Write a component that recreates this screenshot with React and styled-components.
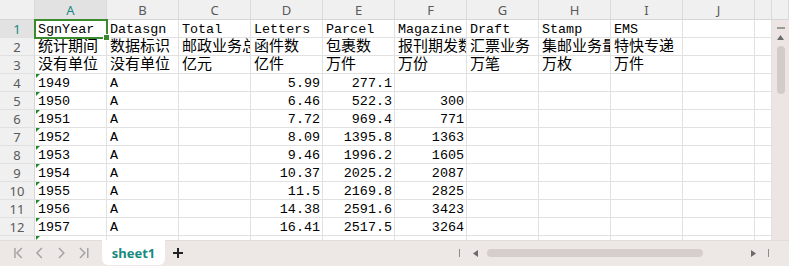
import React from 'react';
import styled, { createGlobalStyle } from 'styled-components';

const cellFont = '"Liberation Mono", "Noto Sans CJK SC", monospace';
const uiFont = '"Noto Sans", "Open Sans", "Noto Sans CJK SC", sans-serif';

const GlobalStyle = createGlobalStyle`
  html, body { margin: 0; padding: 0; background: #fff; }
  body { width: 789px; height: 266px; overflow: hidden; }
`;

const Page = styled.div`
  width: 789px;
  height: 266px;
  display: flex;
  flex-direction: column;
  overflow: hidden;
`;

const Sheet = styled.div`
  height: 240px;
  display: grid;
  grid-template-columns: 35px repeat(10, 72px) 17px 17px;
  grid-auto-rows: 18px;
  grid-template-rows: 20px;
  overflow: hidden;
  position: relative;
`;

const ColHead = styled.div`
  box-sizing: border-box;
  background: ${p => (p.active ? '#e2e2e2' : '#f0f0f0')};
  border-right: 1px solid #dadada;
  border-bottom: 1px solid #d6d6d6;
  color: ${p => (p.active ? '#178a80' : '#5a5a5a')};
  font-family: ${uiFont};
  font-size: 13px;
  display: flex;
  align-items: center;
  justify-content: center;
  padding-top: 1px;
`;

const RowHead = styled.div`
  box-sizing: border-box;
  background: ${p => (p.active ? '#e2e2e2' : '#f0f0f0')};
  border-right: 1px solid #d6d6d6;
  border-bottom: 1px solid #e0e0e0;
  color: ${p => (p.active ? '#178a80' : '#5a5a5a')};
  font-family: ${uiFont};
  font-size: 13px;
  display: flex;
  align-items: center;
  justify-content: center;
`;

const Cell = styled.div`
  box-sizing: border-box;
  position: relative;
  border-right: 1px solid #e1e1e1;
  border-bottom: 1px solid #e1e1e1;
  font-family: ${cellFont};
  font-size: ${p => (p.cjk ? '15px' : '13.4px')};
  line-height: 17px;
  color: #000;
  white-space: nowrap;
  padding: 1px 2px 0 3px;
  text-align: ${p => (p.num ? 'right' : 'left')};
  outline: ${p => (p.selected ? '2px solid #3c8a2e' : 'none')};
  outline-offset: -1px;
  z-index: ${p => (p.selected ? 2 : 0)};
  overflow: ${p => (p.selected ? 'visible' : 'hidden')};
`;

const TextMark = styled.span`
  position: absolute;
  left: 1px;
  top: 0;
  width: 0;
  height: 0;
  border-top: 4px solid #1f8a2a;
  border-right: 4px solid transparent;
`;

const Handle = styled.span`
  position: absolute;
  right: -4px;
  bottom: -4px;
  width: 5px;
  height: 5px;
  background: #3c8a2e;
  border: 1px solid #fff;
`;

const VScroll = styled.div`
  grid-column: 13;
  grid-row: 2 / span 13;
  background: #ede5e3;
  display: flex;
  flex-direction: column;
  align-items: center;
  padding-top: 7px;
  gap: 6px;
`;

const Dash = styled.div`
  width: 8px;
  height: 2px;
  background: #9a9a9a;
`;

const Thumb = styled.div`
  width: 8px;
  height: 48px;
  border-radius: 4px;
  background: #d3cbc9;
`;

const Spacer = styled.div`
  flex: 1;
`;

const DownSlot = styled.div`
  height: 10px;
`;

const Bottom = styled.div`
  height: 26px;
  background: #ede7e5;
  display: flex;
  align-items: flex-start;
  border-top: 1px solid #e2dcda;
  box-sizing: border-box;
`;

const NavGroup = styled.div`
  box-sizing: border-box;
  display: flex;
  align-items: center;
  height: 24px;
  gap: 10px;
  padding-left: 13px;
  width: 90px;
  flex-shrink: 0;
`;

const Tab = styled.div`
  margin-left: 12px;
  margin-top: -1px;
  width: 63px;
  height: 25px;
  background: #fff;
  border-radius: 0 0 6px 6px;
  color: #178a80;
  font-family: ${uiFont};
  font-weight: 700;
  font-size: 13px;
  display: flex;
  align-items: center;
  justify-content: center;
  flex-shrink: 0;
`;

const Plus = styled.div`
  margin-left: 7px;
  height: 24px;
  display: flex;
  align-items: center;
`;

const HScroll = styled.div`
  margin-left: auto;
  padding-right: 20px;
  display: flex;
  align-items: center;
  height: 24px;
`;

const Bar = styled.div`
  width: 1px;
  height: 8px;
  background: #8c8c8c;
`;

const Arrow = styled.div`
  display: flex;
  margin-left: ${p => p.gap}px;
`;

const HThumb = styled.div`
  width: 216px;
  height: 8px;
  border-radius: 4px;
  background: #d5cecc;
  margin-left: 9px;
`;

const NavIcon = ({ type }) => {
  const paths = {
    first: 'M2 1v10M9 1L4 6l5 5',
    prev: 'M7 1L2 6l5 5',
    next: 'M2 1l5 5-5 5',
    last: 'M2 1l5 5-5 5M10 1v10',
  };
  return (
    <svg width="12" height="12" viewBox="0 0 12 12">
      <path d={paths[type]} fill="none" stroke="#a3a3a3" strokeWidth="1.5" />
    </svg>
  );
};

const Tri = ({ dir, color = '#6b6b6b' }) => {
  const pts = {
    up: '0,5 3.5,0 7,5',
    down: '0,0 7,0 3.5,5',
    left: '5,0 5,7 0,3.5',
    right: '0,0 0,7 5,3.5',
  };
  const vert = dir === 'up' || dir === 'down';
  return (
    <svg width={vert ? 7 : 5} height={vert ? 5 : 7}>
      <polygon points={pts[dir]} fill={color} />
    </svg>
  );
};

const cols = ['A', 'B', 'C', 'D', 'E', 'F', 'G', 'H', 'I', 'J'];

const rows = [
  ['SgnYear', 'Datasgn', 'Total', 'Letters', 'Parcel', 'Magazine', 'Draft', 'Stamp', 'EMS'],
  ['统计期间', '数据标识', '邮政业务总量', '函件数', '包裹数', '报刊期发数', '汇票业务', '集邮业务量', '特快专递'],
  ['没有单位', '没有单位', '亿元', '亿件', '万件', '万份', '万笔', '万枚', '万件'],
  ['1949', 'A', '', '5.99', '277.1', ''],
  ['1950', 'A', '', '6.46', '522.3', '300'],
  ['1951', 'A', '', '7.72', '969.4', '771'],
  ['1952', 'A', '', '8.09', '1395.8', '1363'],
  ['1953', 'A', '', '9.46', '1996.2', '1605'],
  ['1954', 'A', '', '10.37', '2025.2', '2087'],
  ['1955', 'A', '', '11.5', '2169.8', '2825'],
  ['1956', 'A', '', '14.38', '2591.6', '3423'],
  ['1957', 'A', '', '16.41', '2517.5', '3264'],
  ['', ''],
];

const App = () => {
  return (
    <Page>
      <GlobalStyle />
      <Sheet>
        <ColHead />
        {cols.map(c => (
          <ColHead key={c} active={c === 'A'}>{c}</ColHead>
        ))}
        <ColHead />
        <ColHead />
        {rows.map((r, ri) => (
          <React.Fragment key={ri}>
            <RowHead active={ri === 0}>{ri + 1}</RowHead>
            {cols.map((c, ci) => {
              const v = r[ci] || '';
              const num = ri >= 3 && ci >= 3;
              const selected = ri === 0 && ci === 0;
              return (
                <Cell key={c} num={num} cjk={ri === 1 || ri === 2} selected={selected}>
                  {ri >= 3 && ci === 0 && <TextMark />}
                  {v}
                  {selected && <Handle />}
                </Cell>
              );
            })}
            <Cell />
          </React.Fragment>
        ))}
        <VScroll>
          <Dash />
          <Tri dir="up" />
          <Thumb />
          <Spacer />
          <DownSlot>
            <Tri dir="down" />
          </DownSlot>
        </VScroll>
      </Sheet>
      <Bottom>
        <NavGroup>
          <NavIcon type="first" />
          <NavIcon type="prev" />
          <NavIcon type="next" />
          <NavIcon type="last" />
        </NavGroup>
        <Tab>sheet1</Tab>
        <Plus>
          <svg width="12" height="12" viewBox="0 0 12 12">
            <path d="M6 1v10M1 6h10" stroke="#222" strokeWidth="2" />
          </svg>
        </Plus>
        <HScroll>
          <Bar />
          <Arrow gap={13}>
            <Tri dir="left" />
          </Arrow>
          <HThumb />
          <Arrow gap={48}>
            <Tri dir="right" />
          </Arrow>
          <Arrow gap={12}>
            <Bar />
          </Arrow>
        </HScroll>
      </Bottom>
    </Page>
  );
};

export default App;
